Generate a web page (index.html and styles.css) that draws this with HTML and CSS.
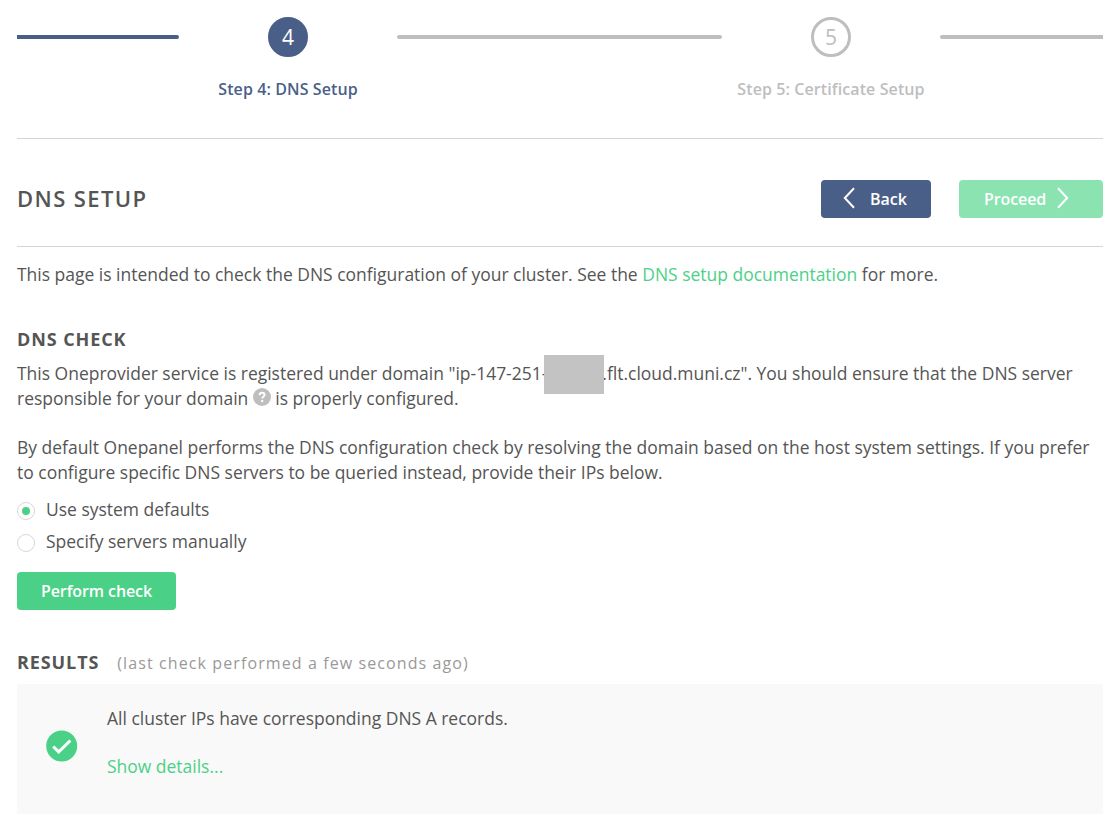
FILE: index.html
```html
<!DOCTYPE html>
<html lang="en">
<head>
<meta charset="utf-8">
<title>DNS Setup</title>
<link rel="stylesheet" href="styles.css">
</head>
<body>
<main class="page">
  <header class="steps">
    <div class="connector connector-done"></div>
    <div class="step step-active"><div class="step-number">4</div><div class="step-label">Step 4: DNS Setup</div></div>
    <div class="connector"></div>
    <div class="step"><div class="step-number">5</div><div class="step-label">Step 5: Certificate Setup</div></div>
    <div class="connector connector-last"></div>
  </header>
  <section class="title-row">
    <h1 class="title">DNS SETUP</h1>
    <button class="btn btn-back"><svg class="chevron" viewBox="0 0 12 22"><path d="M11 1.2 1.8 11 11 20.8"/></svg><span>Back</span></button>
    <button class="btn btn-proceed"><span>Proceed</span><svg class="chevron" viewBox="0 0 12 22"><path d="M1 1.2 10.2 11 1 20.8"/></svg></button>
  </section>
  <p class="text intro">This page is intended to check the DNS configuration of your cluster. See the <a class="link">DNS setup documentation</a> for more.</p>
  <h2 class="heading">DNS CHECK</h2>
  <p class="text domain">This Oneprovider service is registered under domain "ip-147-251-<span class="redacted"></span>.flt.cloud.muni.cz". You should ensure that the DNS server<br>responsible for your domain <svg class="help" viewBox="0 0 18 18"><circle cx="9" cy="9" r="9" fill="#bebebe"/><path d="M6.5 7.2C6.6 5.5 7.6 4.7 9.1 4.7c1.5 0 2.5.8 2.5 2.1 0 1.6-2.4 1.7-2.4 3.8" fill="none" stroke="#fff" stroke-width="1.9"/><circle cx="9.2" cy="13" r="1.2" fill="#fff"/></svg> is properly configured.</p>
  <p class="text resolve">By default Onepanel performs the DNS configuration check by resolving the domain based on the host system settings. If you prefer<br>to configure specific DNS servers to be queried instead, provide their IPs below.</p>
  <div class="options">
    <label class="option"><span class="radio radio-on"></span><span>Use system defaults</span></label>
    <label class="option"><span class="radio"></span><span>Specify servers manually</span></label>
  </div>
  <button class="btn btn-check">Perform check</button>
  <div class="results-head"><h2 class="heading">RESULTS</h2><span class="note">(last check performed a few seconds ago)</span></div>
  <section class="panel">
    <svg class="ok" viewBox="0 0 32 32"><circle cx="15.7" cy="16" r="15.5" fill="#4bd187"/><path d="M7.2 16.5 12.7 21.8 24.4 10.5" fill="none" stroke="#fff" stroke-width="3"/></svg>
    <div class="panel-body"><p class="text">All cluster IPs have corresponding DNS A records.</p><a class="text link">Show details...</a></div>
  </section>
</main>
</body>
</html>
```
FILE: styles.css
```css
* { box-sizing: border-box; }
body { margin: 0; background: #fff; color: #555; font-family: "Open Sans", sans-serif; font-size: 17.48px; line-height: 25px; }
p, h1, h2 { margin: 0; }
.page { padding: 17px 12px 0 17px; }
.steps { display: grid; grid-template-columns: 162px 218px 325px 218px 163px; height: 122px; border-bottom: 1px solid #d4d4d4; }
.connector { height: 4px; margin-top: 18px; background: #bebebe; border-radius: 2px; }
.connector-done { background: #4a5f88; border-radius: 0 2px 2px 0; }
.connector-last { border-radius: 2px 0 0 2px; }
.step { display: flex; flex-direction: column; align-items: center; color: #bebebe; }
.step-number { width: 40px; height: 40px; border: 3px solid #bebebe; border-radius: 50%; text-align: center; font-size: 21px; line-height: 34px; font-weight: 400; }
.step-label { margin-top: 20px; font-size: 16px; line-height: 24px; font-weight: 600; letter-spacing: 0.1px; white-space: nowrap; }
.step-active { color: #4a5f88; }
.step-active .step-number { border-color: #4a5f88; background: #4a5f88; color: #fff; }
.title-row { display: flex; align-items: center; height: 108px; padding-top: 13px; border-bottom: 1px solid #d4d4d4; }
.title { flex: 1; padding-bottom: 2px; font-size: 22px; font-weight: 600; letter-spacing: 1.4px; }
.btn { display: flex; align-items: center; height: 38px; padding: 0; border: 0; border-radius: 4px; color: #fff; font: 600 16px/38px "Open Sans", sans-serif; }
.btn-back { width: 110px; padding-left: 22px; gap: 15px; background: #4a5f88; }
.btn-proceed { width: 144px; margin-left: 28px; padding-left: 25px; gap: 11px; letter-spacing: -0.1px; background: #8ae3b1; }
.chevron { width: 12px; height: 22px; margin-bottom: 3px; fill: none; stroke: currentColor; stroke-width: 2; }
.text { white-space: nowrap; }
.link { color: #4bd187; }
.intro { margin-top: 15px; }
.heading { font-size: 18px; line-height: 25px; font-weight: 700; letter-spacing: 0.9px; }
.intro + .heading { margin-top: 40px; }
.domain { margin-top: 9px; }
.redacted { display: inline-block; position: relative; width: 60px; height: 39px; margin: -6px -1.5px -8px -3.5px; vertical-align: top; background: #c3c3c3; }
.help { width: 18px; height: 18px; vertical-align: -1px; }
.resolve { margin-top: 24px; }
.options { margin-top: 8px; }
.option { display: flex; align-items: center; height: 32px; gap: 11px; }
.radio { display: grid; place-items: center; width: 18px; height: 18px; margin-top: 3px; border: 1px solid #d8d8d8; border-radius: 50%; }
.radio-on::after { content: ""; width: 8px; height: 8px; border-radius: 50%; background: #4bd187; }
.btn-check { width: 159px; margin-top: 15px; justify-content: center; letter-spacing: -0.1px; background: #4bd187; }
.results-head { display: flex; align-items: baseline; gap: 18px; margin-top: 40px; }
.note { color: #999; font-size: 16px; letter-spacing: 1.1px; }
.panel { display: flex; height: 130px; margin-top: 8px; padding-left: 29px; background: #f9f9f9; }
.ok { width: 32px; height: 32px; margin-top: 46px; }
.panel-body { display: flex; flex-direction: column; gap: 23px; margin: 22px 0 0 29px; }
```
